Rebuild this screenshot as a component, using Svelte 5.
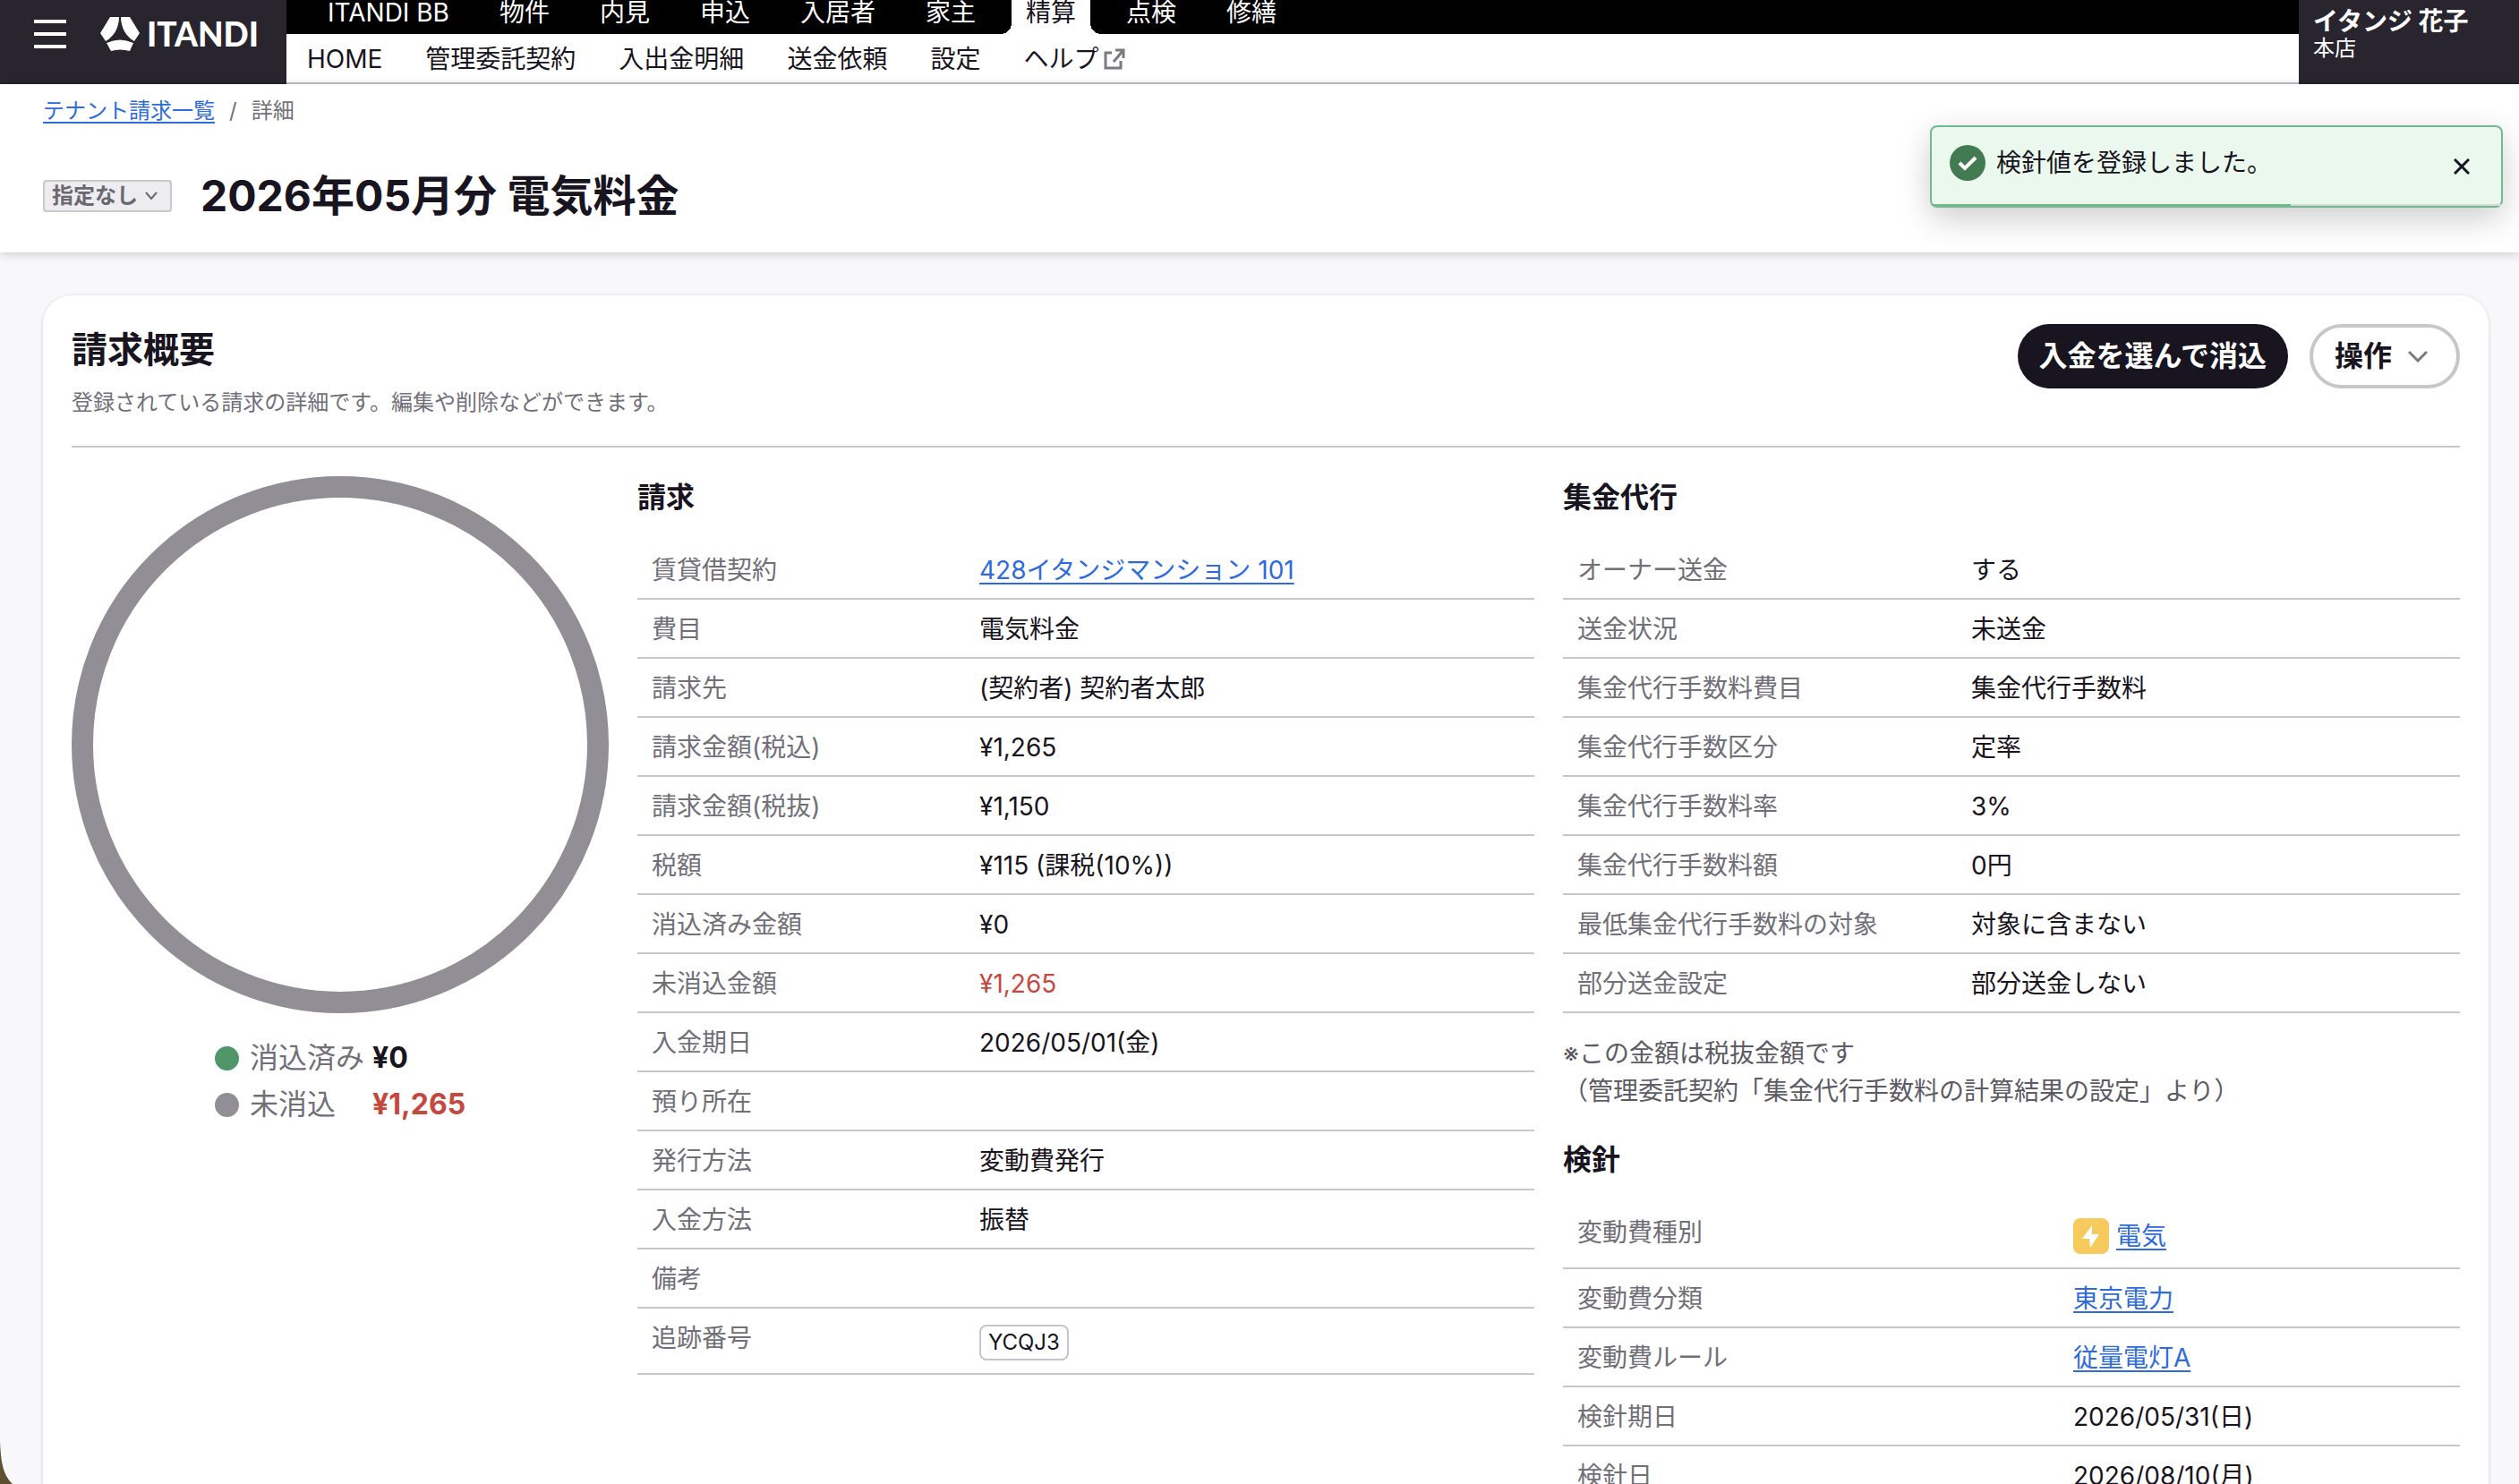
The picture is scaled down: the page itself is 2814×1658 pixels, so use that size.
<script lang="ts">
  type Row = { label: string; value?: string; kind?: 'link' | 'danger' | 'tag' | 'electric' };

  const products = ['ITANDI BB', '物件', '内見', '申込', '入居者', '家主', '精算', '点検', '修繕'];
  const currentProduct = '精算';
  const pages = ['HOME', '管理委託契約', '入出金明細', '送金依頼', '設定'];

  const billing: Row[] = [
    { label: '賃貸借契約', value: '428イタンジマンション 101', kind: 'link' },
    { label: '費目', value: '電気料金' },
    { label: '請求先', value: '(契約者) 契約者太郎' },
    { label: '請求金額(税込)', value: '¥1,265' },
    { label: '請求金額(税抜)', value: '¥1,150' },
    { label: '税額', value: '¥115 (課税(10%))' },
    { label: '消込済み金額', value: '¥0' },
    { label: '未消込金額', value: '¥1,265', kind: 'danger' },
    { label: '入金期日', value: '2026/05/01(金)' },
    { label: '預り所在' },
    { label: '発行方法', value: '変動費発行' },
    { label: '入金方法', value: '振替' },
    { label: '備考' },
    { label: '追跡番号', value: 'YCQJ3', kind: 'tag' }
  ];

  const agency: Row[] = [
    { label: 'オーナー送金', value: 'する' },
    { label: '送金状況', value: '未送金' },
    { label: '集金代行手数料費目', value: '集金代行手数料' },
    { label: '集金代行手数区分', value: '定率' },
    { label: '集金代行手数料率', value: '3%' },
    { label: '集金代行手数料額', value: '0円' },
    { label: '最低集金代行手数料の対象', value: '対象に含まない' },
    { label: '部分送金設定', value: '部分送金しない' }
  ];

  const meter: Row[] = [
    { label: '変動費種別', value: '電気', kind: 'electric' },
    { label: '変動費分類', value: '東京電力', kind: 'link' },
    { label: '変動費ルール', value: '従量電灯A', kind: 'link' },
    { label: '検針期日', value: '2026/05/31(日)' },
    { label: '検針日', value: '2026/08/10(月)' }
  ];

  let toastOpen = $state(true);
</script>

{#snippet details(rows: Row[], size: string)}
  <table class="details {size}">
    <tbody>
      {#each rows as row}
        <tr>
          <th scope="row">{row.label}</th>
          <td>
            {#if row.kind === 'link'}
              <a href="#detail">{row.value}</a>
            {:else if row.kind === 'danger'}
              <span class="danger">{row.value}</span>
            {:else if row.kind === 'tag'}
              <span class="tag">{row.value}</span>
            {:else if row.kind === 'electric'}
              <span class="electric">
                <svg viewBox="0 0 40 40" aria-hidden="true">
                  <rect width="40" height="40" rx="8" fill="#f7ca5d" />
                  <path d="M21 8 10 23h8l1 10 10-15h-8z" fill="#fff" />
                </svg>
                <a href="#electric">{row.value}</a>
              </span>
            {:else}
              {row.value ?? ''}
            {/if}
          </td>
        </tr>
      {/each}
    </tbody>
  </table>
{/snippet}

<div class="app">
  <header class="top">
    <div class="brand">
      <button class="menu" aria-label="メニュー"><span></span><span></span><span></span></button>
      <a class="logo" href="#home">
        <svg viewBox="0 0 44 38" aria-hidden="true">
          <path d="M11 0H21C21 12 15 22 6 27L0 18Z" fill="#fff" />
          <path d="M23 0H33L44 18 38 27C29 22 23 12 23 0Z" fill="#fff" />
          <path d="M7 29Q22 22 37 29L33 38Q22 35 12 38Z" fill="#fff" />
        </svg>
        <span>ITANDI</span>
      </a>
    </div>
    <div class="menus">
      <nav class="products">
        {#each products as name}
          <a href="#product" class:current={name === currentProduct}>{name}</a>
        {/each}
      </nav>
      <nav class="pages">
        {#each pages as name}
          <a href="#page">{name}</a>
        {/each}
        <a class="help" href="#help">
          ヘルプ
          <svg viewBox="0 0 24 24" fill="none" stroke="#7b7982" stroke-width="3" aria-hidden="true">
            <path d="M9 5H2v17h17v-8M13 2h9v9M22 2 11 15" />
          </svg>
        </a>
      </nav>
    </div>
    <div class="user">
      <strong>イタンジ 花子</strong>
      <span>本店</span>
    </div>
  </header>

  <section class="heading">
    <nav class="crumbs">
      <a href="#list">テナント請求一覧</a>
      <span>/</span>
      <span>詳細</span>
    </nav>
    <div class="title">
      <button class="badge">
        指定なし
        <svg viewBox="0 0 14 10" fill="none" stroke="currentColor" stroke-width="2" aria-hidden="true"><path d="m1 1 6 7 6-7" /></svg>
      </button>
      <h1>2026年05月分 電気料金</h1>
    </div>
  </section>

  <main>
    <article class="card">
      <div class="card-head">
        <div>
          <h2>請求概要</h2>
          <p>登録されている請求の詳細です。編集や削除などができます。</p>
        </div>
        <div class="actions">
          <button class="primary">入金を選んで消込</button>
          <button class="secondary">
            操作
            <svg viewBox="0 0 22 14" fill="none" stroke="#7b7982" stroke-width="3" aria-hidden="true"><path d="m1 2 10 10L21 2" /></svg>
          </button>
        </div>
      </div>

      <div class="columns">
        <div class="chart">
          <svg viewBox="0 0 600 600" role="img" aria-label="未消込 100%">
            <circle cx="300" cy="300" r="288" fill="none" stroke="#918e96" stroke-width="24" />
          </svg>
          <dl>
            <dt><i class="done"></i>消込済み</dt>
            <dd>¥0</dd>
            <dt><i></i>未消込</dt>
            <dd class="danger">¥1,265</dd>
          </dl>
        </div>

        <section>
          <h3>請求</h3>
          {@render details(billing, 'narrow')}
        </section>

        <section>
          <h3>集金代行</h3>
          {@render details(agency, 'medium')}
          <p class="note">※この金額は税抜金額です<br />（管理委託契約「集金代行手数料の計算結果の設定」より）</p>
          <h3>検針</h3>
          {@render details(meter, 'wide')}
        </section>
      </div>
    </article>
  </main>

  {#if toastOpen}
    <div class="toast" role="status">
      <svg class="ok" viewBox="0 0 40 40" aria-hidden="true">
        <circle cx="20" cy="20" r="20" fill="#427a51" />
        <path d="m11 20 6 6 12-12" fill="none" stroke="#fff" stroke-width="4" />
      </svg>
      <span>検針値を登録しました。</span>
      <button aria-label="閉じる" onclick={() => (toastOpen = false)}>
        <svg viewBox="0 0 18 18" fill="none" stroke="#181420" stroke-width="3" aria-hidden="true"><path d="m1 1 16 16M17 1 1 17" /></svg>
      </button>
      <progress max="100" value="63" aria-label="残り時間"></progress>
    </div>
  {/if}

  <svg class="corner" viewBox="0 0 14 48" aria-hidden="true"><path d="M0 0C1 26 4 38 14 48H0Z" fill="#5d5132" /></svg>
</div>

<style>
  :global(body) {
    margin: 0;
  }
  .app {
    position: relative;
    height: 100vh;
    overflow: hidden;
    background: #f8f8fb;
    color: #181420;
    font: 28px/42px Inter, 'Noto Sans CJK JP', sans-serif;
  }
  h1, h2, h3, p, dl, dd {
    margin: 0;
  }
  a {
    color: #2e6bdb;
    text-decoration-thickness: 2px;
    text-underline-offset: 4px;
  }
  button {
    font: inherit;
    color: inherit;
    border: 0;
    padding: 0;
    background: none;
    cursor: pointer;
  }
  svg {
    display: block;
    flex: none;
  }
  .danger {
    color: #c5483e;
  }

  .top {
    display: flex;
    height: 94px;
  }
  .brand {
    box-sizing: border-box;
    width: 320px;
    padding: 19px 0 0 38px;
    display: flex;
    align-items: flex-start;
    gap: 38px;
    background: #28252f;
  }
  .menu {
    width: 36px;
    height: 38px;
    display: flex;
    flex-direction: column;
    justify-content: center;
    gap: 10px;
  }
  .menu span {
    height: 4px;
    background: #fff;
  }
  .logo {
    display: flex;
    align-items: center;
    gap: 8px;
    color: #fff;
    font: 900 37px/38px Lato, sans-serif;
    text-decoration: none;
  }
  .logo svg {
    width: 44px;
    height: 38px;
  }
  .menus {
    flex: 1;
    display: flex;
    flex-direction: column;
  }
  .products {
    box-sizing: border-box;
    height: 38px;
    padding-left: 18px;
    display: flex;
    background: #000;
  }
  .products a {
    padding: 0 28px 10px;
    line-height: 28px;
    color: #fff;
    text-decoration: none;
  }
  .products .current {
    position: relative;
    margin: 0 12px;
    padding: 0 16px 10px;
    background: #fff;
    color: #181420;
  }
  .current::before,
  .current::after {
    content: '';
    position: absolute;
    bottom: 0;
    width: 12px;
    height: 12px;
  }
  .current::before {
    right: 100%;
    background: radial-gradient(circle at 0 0, #000 12px, #fff 12px);
  }
  .current::after {
    left: 100%;
    background: radial-gradient(circle at 100% 0, #000 12px, #fff 12px);
  }
  .pages {
    flex: 1;
    padding: 2px 0 0 23px;
    display: flex;
    align-items: center;
    gap: 48px;
    background: #fff;
    border-bottom: 2px solid #c1c0c8;
  }
  .pages a {
    color: inherit;
    text-decoration: none;
  }
  .help {
    display: flex;
    align-items: center;
    gap: 6px;
  }
  .help svg {
    width: 24px;
    height: 24px;
  }
  .user {
    box-sizing: border-box;
    width: 246px;
    padding: 9px 16px;
    display: flex;
    flex-direction: column;
    background: #28252f;
    color: #fff;
    font-size: 24px;
    line-height: 30px;
  }
  .user strong {
    font-size: 28px;
  }

  .heading {
    position: relative;
    padding: 9px 48px 30px;
    background: #fff;
    box-shadow: 0 2px 10px rgba(24, 20, 50, 0.2);
  }
  .crumbs {
    display: flex;
    gap: 16px;
    color: #716f77;
    font-size: 24px;
  }
  .title {
    margin-top: 41px;
    display: flex;
    align-items: center;
    gap: 32px;
  }
  .title h1 {
    font-size: 48px;
    line-height: 66px;
  }
  .badge {
    box-sizing: border-box;
    height: 36px;
    padding: 0 14px 0 8px;
    display: flex;
    align-items: center;
    gap: 8px;
    border: 2px solid #c9c8cd;
    border-radius: 4px;
    background: #ededef;
    color: #6a6871;
    font-size: 24px;
    font-weight: 700;
    line-height: 32px;
  }
  .badge svg {
    width: 14px;
    height: 10px;
  }

  main {
    padding: 48px 34px 48px 48px;
  }
  .card {
    padding: 32px;
    border-radius: 32px;
    background: #fff;
    box-shadow: 0 1px 4px rgba(24, 20, 50, 0.18);
  }
  .card-head {
    display: flex;
    justify-content: space-between;
    padding-bottom: 27px;
    border-bottom: 2px solid #c7c6cc;
  }
  .card-head h2 {
    font-size: 40px;
    line-height: 58px;
  }
  .card-head p {
    margin-top: 9px;
    color: #716f77;
    font-size: 24px;
  }
  .actions {
    display: flex;
    align-items: flex-start;
    gap: 24px;
  }
  .actions button {
    box-sizing: border-box;
    height: 72px;
    display: flex;
    align-items: center;
    border-radius: 36px;
    font-size: 32px;
    font-weight: 700;
  }
  .actions .primary {
    padding: 0 24px;
    background: #181420;
    color: #fff;
  }
  .actions .secondary {
    padding: 0 32px 0 24px;
    gap: 18px;
    border: 4px solid #c7c6cb;
    background: #fff;
  }
  .secondary svg {
    width: 22px;
    height: 14px;
  }

  .columns {
    margin-top: 32px;
    display: grid;
    grid-template-columns: 600px 1fr 1fr;
    align-items: start;
    gap: 32px;
  }
  .chart dl {
    margin-top: 24px;
    padding-left: 160px;
    display: grid;
    grid-template-columns: max-content 1fr;
    column-gap: 9px;
    font-size: 32px;
    line-height: 52px;
  }
  .chart dt {
    display: flex;
    align-items: center;
    gap: 12px;
    color: #716f77;
  }
  .chart dd {
    font-weight: 700;
  }
  .chart i {
    width: 27px;
    height: 27px;
    border-radius: 50%;
    background: #918e96;
  }
  .chart .done {
    background: #4f9668;
  }
  h3 {
    margin-bottom: 24px;
    font-size: 32px;
    line-height: 48px;
  }
  .details {
    width: 100%;
    border-collapse: collapse;
    table-layout: fixed;
  }
  .details th,
  .details td {
    height: 42px;
    padding: 12px 16px 10px;
    border-bottom: 2px solid #c7c6cc;
    text-align: left;
    vertical-align: top;
    font-weight: 400;
  }
  .details th {
    color: #716f77;
  }
  .narrow th {
    width: 334px;
  }
  .medium th {
    width: 408px;
  }
  .wide th {
    width: 522px;
  }
  .tag {
    box-sizing: border-box;
    height: 40px;
    margin: 6px 0 4px;
    padding: 0 8px;
    display: inline-block;
    vertical-align: top;
    border: 2px solid #c5c4ca;
    border-radius: 8px;
    font-size: 24px;
    line-height: 36px;
  }
  .electric {
    padding: 4px 0;
    display: flex;
    align-items: center;
    gap: 8px;
  }
  .electric svg {
    width: 40px;
    height: 40px;
  }
  .note {
    margin: 24px 0 32px;
    color: #5d5b64;
  }

  .toast {
    position: absolute;
    top: 140px;
    right: 18px;
    box-sizing: border-box;
    width: 640px;
    height: 92px;
    padding: 20px 35px 20px 20px;
    display: flex;
    align-items: flex-start;
    gap: 12px;
    border: 2px solid #74b98e;
    border-radius: 8px;
    background: #ebf8ee;
    box-shadow: 0 12px 36px rgba(0, 0, 0, 0.2);
    line-height: 40px;
  }
  .ok {
    width: 40px;
    height: 40px;
  }
  .toast button {
    margin: 15px 0 0 auto;
  }
  .toast button svg {
    width: 18px;
    height: 18px;
  }
  .toast progress {
    position: absolute;
    inset: auto 0 0 0;
    width: 100%;
    height: 2px;
    appearance: none;
    border: 0;
    background: #d5d9d8;
  }
  .toast progress::-webkit-progress-bar {
    background: #d5d9d8;
  }
  .toast progress::-webkit-progress-value {
    background: #74b98e;
  }
  .corner {
    position: absolute;
    left: 0;
    bottom: 0;
    width: 14px;
    height: 48px;
  }
</style>
